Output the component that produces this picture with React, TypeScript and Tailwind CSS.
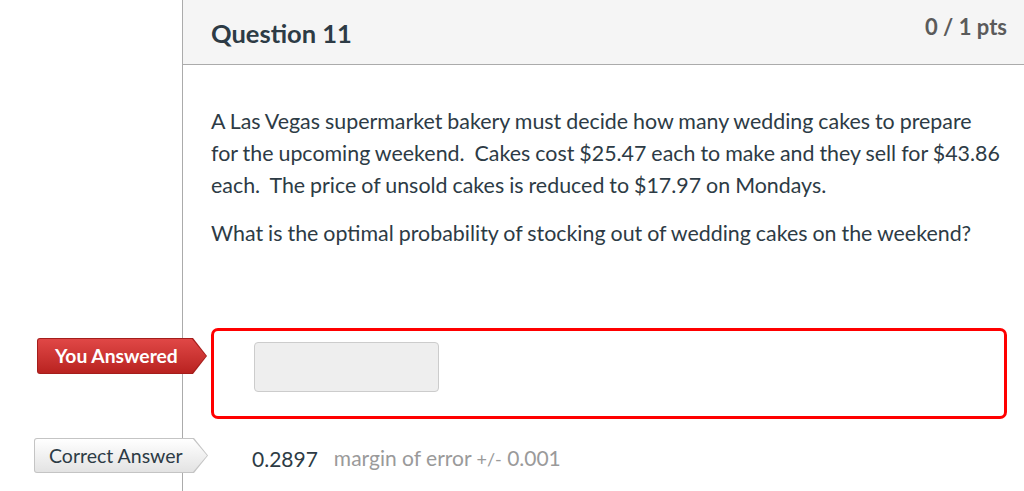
import React from 'react';

const font = { fontFamily: 'Lato, "Open Sans", sans-serif' };

function Badge({ label, variant, className }: { label: string; variant: 'wrong' | 'correct'; className: string }) {
  const clip =
    '[clip-path:polygon(0_0,calc(100%-14px)_0,100%_50%,calc(100%-14px)_100%,0_100%)]';
  const outer = variant === 'wrong' ? 'bg-[#a51d1b]' : 'bg-[#c4c4c4]';
  const inner =
    variant === 'wrong'
      ? 'bg-gradient-to-b from-[#e04746] to-[#b92220] text-white font-bold pl-[17px]'
      : 'bg-gradient-to-b from-[#ffffff] to-[#e3e3e3] text-[#2d3b45] pl-[14px]';
  return (
    <div className={`absolute ${className} ${outer} ${clip} rounded-l-[3px] p-px`}>
      <div className={`h-full w-full ${inner} ${clip} rounded-l-[2px] flex items-center leading-none`}>
        {label}
      </div>
    </div>
  );
}

export default function App() {
  return (
    <div className="min-h-screen bg-white" style={font}>
      <div className="ml-[182px] min-h-[491px] border-l border-[#ababab]">
        <div className="flex h-[65px] items-start justify-between border-b border-[#ababab] bg-[#f5f5f5] pl-[28px] pr-[17px]">
          <h2 className="pt-[17px] text-[25.5px] font-bold leading-[32px] text-[#2d3b45]">Question 11</h2>
          <div className="pt-[13px] text-[22px] font-bold leading-[28px] text-[#5b5b5b]">0 / 1 pts</div>
        </div>

        <div className="pl-[28px] pr-[17px] pt-[40px] text-[21.4px] leading-[32px] text-[#2d3b45] [word-spacing:-0.5px]">
          <p className="whitespace-nowrap">
            A Las Vegas supermarket bakery must decide how many wedding cakes to prepare
            <br />
            for the upcoming weekend.&nbsp; Cakes cost $25.47 each to make and they sell for $43.86
            <br />
            each.&nbsp; The price of unsold cakes is reduced to $17.97 on Mondays.
          </p>
          <p className="mt-[16px]">
            What is the optimal probability of stocking out of wedding cakes on the weekend?
          </p>

          <div className="relative mt-[79px] rounded-[7px] border-[3px] border-[#ff0000] pb-[24px] pl-[40px] pt-[11px] [word-spacing:normal]">
            <Badge label="You Answered" variant="wrong" className="left-[-177px] top-[7px] h-[36px] w-[170px] text-[19.3px]" />
            <div className="h-[50px] w-[185px] rounded-[4px] border border-[#cccccc] bg-[#eeeeee]" />
          </div>

          <div className="relative mt-[19px] flex items-center pl-[41px] text-[21px] leading-[40px] [word-spacing:normal]">
            <Badge label="Correct Answer" variant="correct" className="left-[-177px] top-0 h-[35px] w-[174px] text-[19.5px]" />
            <span className="text-[#2d3b45]">0.2897</span>
            <span className="ml-[16px] text-[#9a9a9a]">
              margin of error <span className="text-[18px]">+/-</span> 0.001
            </span>
          </div>
        </div>
      </div>
    </div>
  );
}
